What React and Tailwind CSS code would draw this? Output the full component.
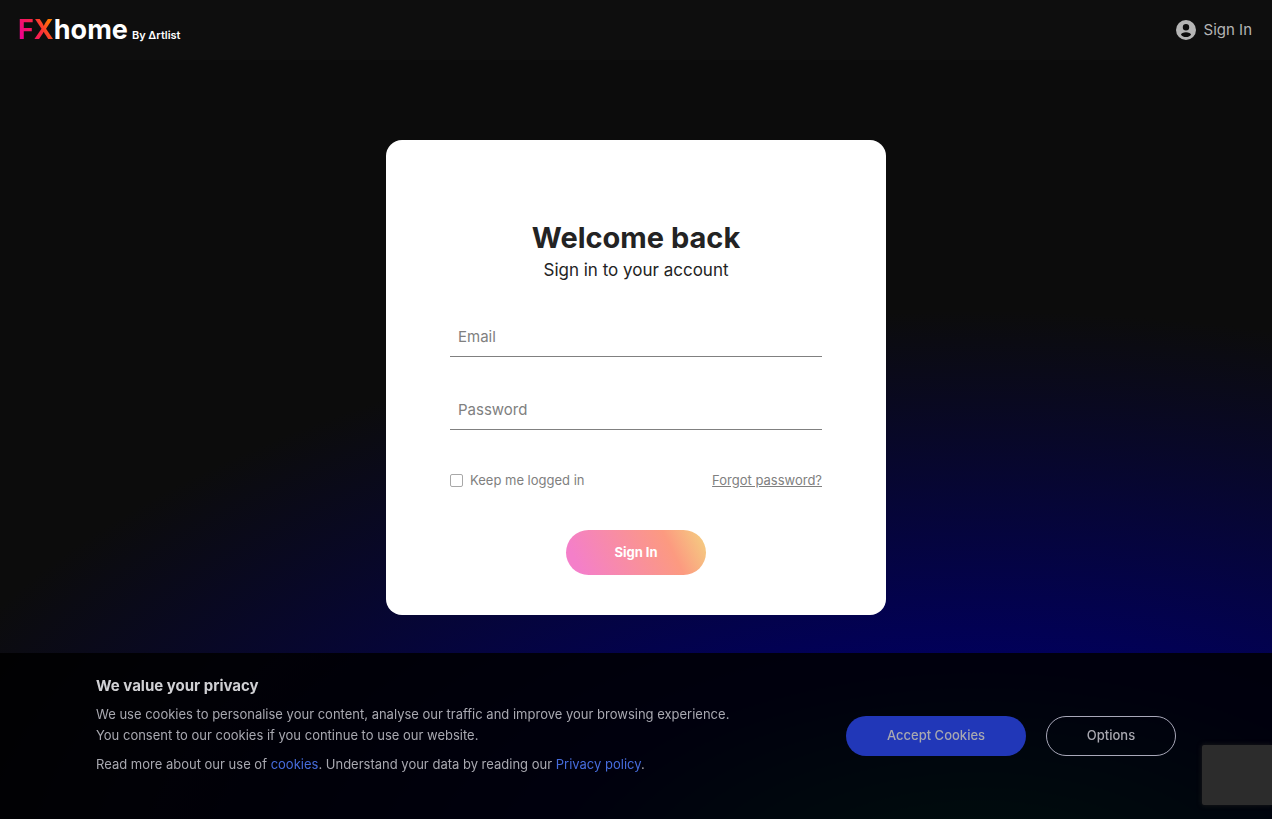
import React, { useState } from 'react'

const Logo = () => (
  <a href="/" aria-label="FXhome by Artlist" className="flex items-baseline gap-1 font-bold text-white">
    <span className="text-[27px] leading-8">
      <span className="bg-[linear-gradient(60deg,#ee0090_15%,#f9273f_55%,#ff7a00_85%)] bg-clip-text text-transparent">FX</span>
      home
    </span>
    <span className="text-[11px] leading-4 font-semibold">By ∆rtlist</span>
  </a>
)

const UserIcon = () => (
  <svg className="size-5" viewBox="0 0 20 20" fill="currentColor" aria-hidden="true">
    <path
      fillRule="evenodd"
      d="M10 0a10 10 0 1 0 0 20a10 10 0 1 0 0-20zM10 4a3.2 3.2 0 1 1 0 6.4a3.2 3.2 0 1 1 0-6.4zM10 12.200c2.600 0 5 1.100 5 2.600c-1.100 1.400-2.900 2.300-5 2.300s-3.900-.9-5-2.300c0-1.500 2.400-2.600 5-2.600z"
    />
  </svg>
)

const Field = ({ label, type, name }) => (
  <input
    type={type}
    name={name}
    aria-label={label}
    placeholder={label}
    className="h-[41px] w-full border-b border-[#808080] px-2 text-[15px] text-[#232323] outline-none placeholder:text-[#808080]"
  />
)

const CookieBanner = () => (
  <section className="fixed inset-x-0 bottom-0 bg-black/85 px-6 py-[21px] text-[13px] text-[#a8a8b0] lg:px-24">
    <div className="flex flex-wrap items-center justify-between gap-6">
      <div className="flex flex-col gap-2 pb-[23px]">
        <div>
          <h2 className="mb-1.5 text-[15px] leading-6 font-bold text-[#d0d0d4]">We value your privacy</h2>
          <p className="leading-[21px]">
            We use cookies to personalise your content, analyse our traffic and improve your browsing experience.
            <br />
            You consent to our cookies if you continue to use our website.
          </p>
        </div>
        <p className="leading-[21px]">
          Read more about our use of <a href="/cookies" className="text-[#466cdc]">cookies</a>. Understand your data by
          reading our <a href="/privacy" className="text-[#466cdc]">Privacy policy</a>.
        </p>
      </div>
      <div className="flex gap-5 font-medium">
        <button className="h-10 w-45 rounded-full bg-[#2137b8]">Accept Cookies</button>
        <button className="h-10 w-[130px] rounded-full border border-[#a8a8b8]">Options</button>
      </div>
    </div>
  </section>
)

const App = () => {
  const [keepLoggedIn, setKeepLoggedIn] = useState(false)

  return (
    <div className="min-h-screen bg-[#0c0c0c] bg-[radial-gradient(89%_72%_at_77%_110%,#00705c_0%,#01005a_41%,#0c0c0c_100%)] pb-51 font-[Inter,sans-serif]">
      {/* Header */}
      <header className="flex h-15 items-center justify-between bg-[#0e0e0e] pr-5 pl-[18px]">
        <Logo />
        <a href="/login" className="flex items-center gap-2 text-[15px] text-[#b5b5b5]">
          <UserIcon />
          Sign In
        </a>
      </header>

      {/* Login card */}
      <main className="px-4 pt-20">
        <form
          onSubmit={(e) => e.preventDefault()}
          className="mx-auto max-w-125 rounded-2xl bg-white px-8 pt-20 pb-10 sm:px-16"
        >
          <div className="text-center text-[#232323]">
            <h1 className="text-[29px] leading-9 font-bold">Welcome back</h1>
            <p className="text-[17px] leading-7">Sign in to your account</p>
          </div>

          <div className="mt-8 flex flex-col gap-8">
            <Field label="Email" type="email" name="email" />
            <Field label="Password" type="password" name="password" />
          </div>

          <div className="mt-10 flex items-center justify-between text-[13px] leading-5 text-[#808080]">
            <label className="flex items-center gap-[7px]">
              <input
                type="checkbox"
                checked={keepLoggedIn}
                onChange={(e) => setKeepLoggedIn(e.target.checked)}
                className="size-[13px] appearance-none rounded-xs border border-[#a8a8a8] checked:bg-[#808080]"
              />
              Keep me logged in
            </label>
            <a href="/forgot-password" className="underline">Forgot password?</a>
          </div>

          <button
            type="submit"
            className="mx-auto mt-10 block h-[45px] w-35 rounded-full bg-[linear-gradient(64deg,#f47fc9_10%,#fc9a80_73%,#f5c881_95%)] text-[13px] font-bold text-white"
          >
            Sign In
          </button>
        </form>
      </main>

      <CookieBanner />

      <div className="fixed right-0 bottom-[14px] h-15 w-[70px] rounded-l-xs bg-[#2c2c2c] shadow-[0_0_5px_#1c1c1c]" />
    </div>
  )
}

export default App
